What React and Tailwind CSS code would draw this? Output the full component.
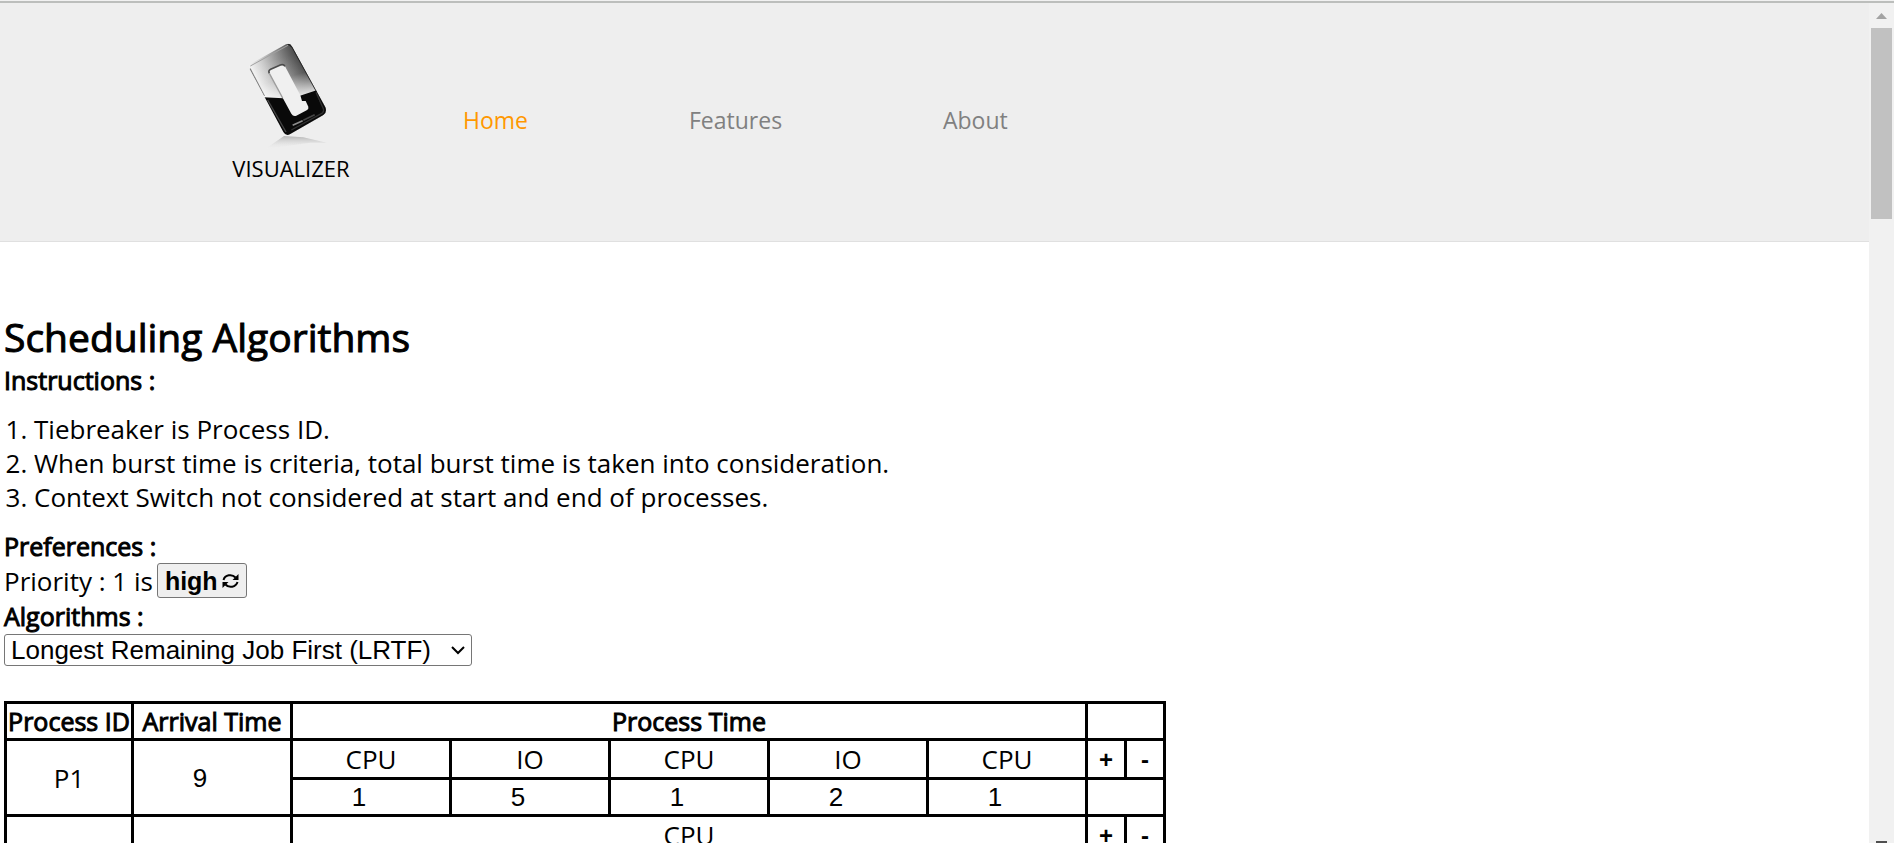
const navItems = [
  { label: "Home", active: true, place: "w-[226px]" },
  { label: "Features", active: false, place: "w-[254px]" },
  { label: "About", active: false, place: "" },
];

const bursts = [
  { kind: "CPU", value: 1 },
  { kind: "IO", value: 5 },
  { kind: "CPU", value: 1 },
  { kind: "IO", value: 2 },
  { kind: "CPU", value: 1 },
];

const cell = "border-3 border-black p-0 text-center";
const heading = "font-normal [-webkit-text-stroke:1px_black]";

function Logo() {
  return (
    <svg viewBox="33 0 360 378" className="h-[126px] w-[120px]" aria-hidden="true">
      <defs>
        <linearGradient id="silver" gradientUnits="userSpaceOnUse" x1="100" y1="130" x2="240" y2="75">
          <stop offset="0" stopColor="#f2f2f2" />
          <stop offset="0.25" stopColor="#cccccc" />
          <stop offset="0.6" stopColor="#8a8a8a" />
          <stop offset="1" stopColor="#3c3c3c" />
        </linearGradient>
        <linearGradient id="fade" gradientUnits="userSpaceOnUse" x1="190" y1="80" x2="225" y2="200">
          <stop offset="0" stopColor="#ffffff" stopOpacity="0" />
          <stop offset="0.5" stopColor="#ffffff" stopOpacity="0.1" />
          <stop offset="1" stopColor="#ffffff" stopOpacity="0.8" />
        </linearGradient>
        <linearGradient id="floor" x1="0" y1="0" x2="0" y2="1">
          <stop offset="0" stopColor="#8e8e8e" stopOpacity="0.6" />
          <stop offset="1" stopColor="#eeeeee" stopOpacity="0" />
        </linearGradient>
        <filter id="soft" x="-20%" y="-20%" width="140%" height="140%">
          <feGaussianBlur stdDeviation="2" />
        </filter>
        <clipPath id="frame">
          <path d="M88 116 Q86 104 98 98 L198 43 Q210 38 217 51 L316 232 Q322 246 310 255 L211 312 Q198 320 190 306 Z" />
        </clipPath>
      </defs>
      <path d="M135 358 L192 318 L250 322 L320 338 L270 338 L220 345 Z" fill="url(#floor)" filter="url(#soft)" />
      <g clipPath="url(#frame)">
        <path d="M80 30 H330 V330 H80 Z" fill="url(#silver)" />
        <path d="M80 30 H330 V330 H80 Z" fill="url(#fade)" />
        <path d="M204 38 L218 50 L292 184" fill="none" stroke="#222222" strokeWidth="8" filter="url(#soft)" />
        <path d="M91 108 L204 46" fill="none" stroke="#a0a0a0" strokeWidth="3" />
        <path d="M90 116 L133 198" fill="none" stroke="#808080" strokeWidth="4" />
        <path d="M130 202 L190 205 L240 197 L292 180 L335 240 L200 330 Z" fill="#090909" />
        <path d="M143 210 L198 306" fill="none" stroke="#444444" strokeWidth="4" filter="url(#soft)" />
        <path d="M288 187 L310 236 Q313 246 304 251 L214 300" fill="none" stroke="#303030" strokeWidth="4" filter="url(#soft)" />
      </g>
      <path d="M148 130 Q144 122 152 118 L181 105 Q190 101 195 109 L241 196 L246 213 L257 213 L265 230 Q267 237 260 241 L229 257 Q220 261 214 251 L190 207 Z" fill="#f0f0f0" />
      <path d="M148 130 Q144 122 152 118 L181 105 Q190 101 195 109" fill="none" stroke="#4b4b4b" strokeWidth="5" filter="url(#soft)" />
      <path d="M148 130 L188 204" fill="none" stroke="#9c9c9c" strokeWidth="4" />
      <path d="M218 286 L248 272" fill="none" stroke="#8c8c8c" strokeWidth="5" filter="url(#soft)" />
      <path d="M250 271 L284 254" fill="none" stroke="#444444" strokeWidth="5" filter="url(#soft)" />
    </svg>
  );
}

function RefreshIcon() {
  return (
    <svg viewBox="0 0 17 16" className="h-4 w-[17px]" aria-hidden="true">
      <g fill="none" stroke="black" strokeWidth="2">
        <path d="M1.5 7 C3 1.8 10 0.6 13.5 4.5" />
        <path d="M15.5 9 C14 14.2 7 15.4 3.5 11.5" />
      </g>
      <path d="M16.5 1 V7 H10.5 Z" />
      <path d="M0.5 15 V9 H6.5 Z" />
    </svg>
  );
}

function BurstInput({ label, value }) {
  return (
    <input
      type="text"
      inputMode="numeric"
      aria-label={label}
      defaultValue={value}
      className="block w-full bg-transparent pr-6 text-center font-['Liberation_Sans',sans-serif] text-[26px] leading-[34px] outline-none"
    />
  );
}

function RowButton({ children, label }) {
  return (
    <button type="button" aria-label={label} className="block w-full pt-[2px] font-['Liberation_Sans',sans-serif] text-[24px] leading-[34px] font-bold">
      {children}
    </button>
  );
}

export default function App() {
  return (
    <div className="flex h-screen flex-col overflow-hidden bg-white font-['Open_Sans',sans-serif] text-black">
      <div className="h-[3px] shrink-0 border-t border-b-2 border-t-[#f1f1f1] border-b-[#bcbebc]" />
      <div className="flex min-h-0 flex-1">
        <div className="min-w-0 flex-1 overflow-hidden">
          <header className="flex h-[239px] border-b border-[#e0e0e0] bg-[#eeeeee] pl-[231px]">
            <a href="#home" className="flex w-[120px] flex-col items-center pt-[27px]">
              <Logo />
              <span className="text-[22px] leading-6">VISUALIZER</span>
            </a>
            <nav className="flex pt-[99px] pl-[112px]">
              {navItems.map((item) => (
                <div key={item.label} className={item.place}>
                  <a href={"#" + item.label.toLowerCase()} className={item.active ? "text-[23px] leading-9 text-[#ff9800]" : "text-[23px] leading-9 text-[#808080]"}>
                    {item.label}
                  </a>
                </div>
              ))}
            </nav>
          </header>

          <main className="px-1 pt-[69px] text-[26px] leading-[34px]">
            <h1 className={"text-[39px] leading-[52px] " + heading}>Scheduling Algorithms</h1>
            <h2 className={"text-[25px] leading-[34px] " + heading}>Instructions :</h2>
            <ol className="list-decimal py-[15px] pl-[30px]">
              <li>Tiebreaker is Process ID.</li>
              <li>When burst time is criteria, total burst time is taken into consideration.</li>
              <li>Context Switch not considered at start and end of processes.</li>
            </ol>
            <h2 className={"text-[25px] leading-[34px] " + heading}>Preferences :</h2>
            <div className="flex items-center gap-1">
              <span>Priority : 1 is</span>
              <button type="button" className="flex h-[35px] items-center gap-1 rounded-[3px] border border-[#767676] bg-[#efefef] px-[7px] font-['Liberation_Sans',sans-serif] text-[25px] font-bold">
                high
                <RefreshIcon />
              </button>
            </div>
            <label htmlFor="algorithm" className={"block text-[25px] leading-[36px] " + heading}>Algorithms :</label>
            <div className="relative w-[468px]">
              <select id="algorithm" defaultValue="lrtf" className="block h-8 w-full appearance-none rounded-[3px] border border-[#767676] bg-white px-[6px] font-['Liberation_Sans',sans-serif] text-[26px] leading-[30px]">
                <option value="lrtf">Longest Remaining Job First (LRTF)</option>
              </select>
              <svg viewBox="0 0 14 9" className="pointer-events-none absolute top-3 right-[7px] h-[9px] w-[14px]" fill="none" stroke="black" strokeWidth="2" aria-hidden="true">
                <path d="M1 1 L7 7 L13 1" />
              </svg>
            </div>

            <table className="mt-[35px] w-[1162px] table-fixed border-collapse">
              <colgroup>
                <col className="w-[127px]" />
                <col className="w-[159px]" />
                <col className="w-[159px]" />
                <col className="w-[159px]" />
                <col className="w-[159px]" />
                <col className="w-[159px]" />
                <col className="w-[159px]" />
                <col className="w-[39px]" />
                <col className="w-[39px]" />
              </colgroup>
              <thead className="text-[25px]">
                <tr>
                  <th className={cell + " whitespace-nowrap " + heading}>Process ID</th>
                  <th className={cell + " " + heading}>Arrival Time</th>
                  <th colSpan={5} className={cell + " " + heading}>Process Time</th>
                  <td colSpan={2} className={cell} />
                </tr>
              </thead>
              <tbody>
                <tr>
                  <td rowSpan={2} className={cell}>P1</td>
                  <td rowSpan={2} className={cell}><BurstInput label="P1 arrival time" value={9} /></td>
                  {bursts.map((b, i) => (
                    <td key={i} className={cell + " h-[39px]"}>{b.kind}</td>
                  ))}
                  <td className={cell}><RowButton label="Add burst">+</RowButton></td>
                  <td className={cell}><RowButton label="Remove burst">-</RowButton></td>
                </tr>
                <tr>
                  {bursts.map((b, i) => (
                    <td key={i} className={cell}><BurstInput label={"P1 " + b.kind + " burst " + (i + 1)} value={b.value} /></td>
                  ))}
                  <td colSpan={2} className={cell} />
                </tr>
                <tr>
                  <td rowSpan={2} className={cell}>P2</td>
                  <td rowSpan={2} className={cell}><BurstInput label="P2 arrival time" value={0} /></td>
                  <td colSpan={5} className={cell + " h-[39px]"}>CPU</td>
                  <td className={cell}><RowButton label="Add burst">+</RowButton></td>
                  <td className={cell}><RowButton label="Remove burst">-</RowButton></td>
                </tr>
                <tr>
                  <td colSpan={5} className={cell}><BurstInput label="P2 CPU burst" value={1} /></td>
                  <td colSpan={2} className={cell} />
                </tr>
              </tbody>
            </table>
          </main>
        </div>

        <div className="flex w-[25px] shrink-0 flex-col items-center justify-between bg-[#f1f1f1] pt-[10px]" aria-hidden="true">
          <div className="flex w-full flex-col items-center gap-[9px]">
            <svg viewBox="0 0 11 6" className="h-[6px] w-[11px]"><path d="M0 6 L5.5 0 L11 6 Z" fill="#a3a3a3" /></svg>
            <div className="h-[191px] w-[21px] bg-[#c1c1c1]" />
          </div>
          <div className="h-[2px] w-[11px] bg-[#505050]" />
        </div>
      </div>
    </div>
  );
}
